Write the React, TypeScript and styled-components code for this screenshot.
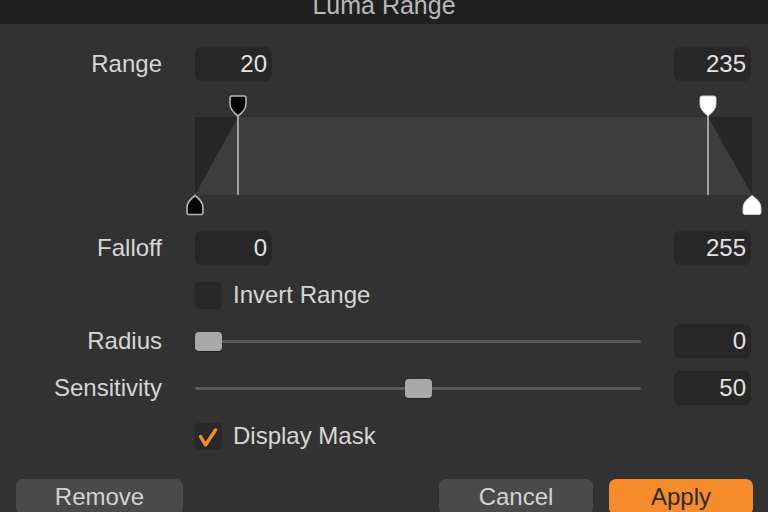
import React from "react";
import styled, { createGlobalStyle } from "styled-components";

const Global = createGlobalStyle`
  html, body { margin: 0; padding: 0; background: #323232; }
  body { width: 768px; height: 512px; overflow: hidden; font-family: "Liberation Sans", Arial, sans-serif; }
`;

const Dialog = styled.div`
  width: 768px;
  height: 512px;
  background: #323232;
  display: flex;
  flex-direction: column;
  overflow: hidden;
  color: #d8d8d8;
  font-size: 24px;
`;

const TitleBar = styled.div`
  height: 24px;
  flex: none;
  background: #1f1f1f;
  display: flex;
  justify-content: center;
  overflow: hidden;
`;

const Title = styled.div`
  line-height: 24px;
  margin-top: -7px;
  font-size: 25px;
  color: #b8b8b8;
`;

const Row = styled.div<{ $top: number; $h: number }>`
  display: grid;
  grid-template-columns: 162px 446px 77px;
  column-gap: 33px;
  align-items: center;
  margin-top: ${(p) => p.$top}px;
  height: ${(p) => p.$h}px;
  flex: none;
`;

const Label = styled.div`
  text-align: right;
  color: #d6d6d6;
  white-space: nowrap;
`;

const NumBox = styled.div`
  width: 77px;
  height: 34px;
  box-sizing: border-box;
  background: #272727;
  border-radius: 6px;
  display: flex;
  align-items: center;
  justify-content: flex-end;
  padding-right: 5px;
  color: #e2e2e2;
`;

const GraphCell = styled.div`
  grid-column: 2 / 4;
  height: 121px;
`;

const CheckCell = styled.div`
  grid-column: 2 / 4;
  display: flex;
  align-items: center;
  gap: 11px;
`;

const Box = styled.div`
  width: 27px;
  height: 27px;
  border-radius: 4px;
  background: #282828;
  display: flex;
  align-items: center;
  justify-content: center;
`;

const CheckText = styled.span`
  color: #d6d6d6;
`;

const Track = styled.div`
  position: relative;
  height: 19px;
  display: flex;
  align-items: center;
`;

const TrackLine = styled.div`
  height: 3px;
  width: 100%;
  background: #595959;
  border-radius: 2px;
`;

const Thumb = styled.div`
  position: absolute;
  top: 0;
  width: 27px;
  height: 19px;
  border-radius: 4px;
  background: #a9a9a9;
  box-shadow: 0 1px 1px rgba(0, 0, 0, 0.35);
`;

const ButtonBar = styled.div`
  display: flex;
  align-items: flex-start;
  margin-top: 30px;
  padding: 0 15px 0 16px;
  gap: 16px;
  flex: none;
`;

const Spacer = styled.div`
  flex: 1;
`;

const Button = styled.div<{ $w: number; $primary?: boolean }>`
  width: ${(p) => p.$w}px;
  height: 36px;
  border-radius: 7px;
  background: ${(p) => (p.$primary ? "#f68b2c" : "#4a4a4a")};
  color: ${(p) => (p.$primary ? "#2b2b2b" : "#d2d2d2")};
  display: flex;
  justify-content: center;
  padding-top: 4px;
  box-sizing: border-box;
  font-size: 24px;
  line-height: 28px;
`;

const Slider = ({ value }: { value: number }) => {
  const left = (446 - 27) * (value / 100);
  return (
    <Track>
      <TrackLine />
      <Thumb style={{ left }} />
    </Track>
  );
};

const topHandle = (cx: number) =>
  `M ${cx - 6} 1 h 12 q 2 0 2 2 v 6 q 0 6 -8 12 q -8 -6 -8 -12 v -6 q 0 -2 2 -2 z`;
const bottomHandle = (cx: number, w: number) =>
  `M ${cx} 100.5 q ${w} 6 ${w} 12 v 5 q 0 2 -2 2 h ${-(w * 2 - 4)} q -2 0 -2 -2 v -5 q 0 -6 ${w} -12 z`;

const Graph = () => (
  <svg width="556" height="121" viewBox="0 0 556 121" style={{ overflow: "visible", display: "block" }}>
    <rect x="0" y="22" width="557" height="78" fill="#262626" />
    <polygon points="43,22 513,22 557,100 0,100" fill="#3d3d3d" />
    <line x1="43" y1="18" x2="43" y2="100" stroke="#a0a0a0" strokeWidth="2" />
    <line x1="513" y1="18" x2="513" y2="100" stroke="#a0a0a0" strokeWidth="2" />
    <path d={topHandle(43)} fill="#050505" stroke="#b4b4b4" strokeWidth="1.6" />
    <path d={topHandle(513)} fill="#ffffff" stroke="#cfcfcf" strokeWidth="1" />
    <path d={bottomHandle(0, 8)} fill="#050505" stroke="#b4b4b4" strokeWidth="1.6" />
    <path d={bottomHandle(557, 9)} fill="#ffffff" stroke="#cfcfcf" strokeWidth="1" />
  </svg>
);

const Check = () => (
  <svg width="27" height="27" viewBox="0 0 27 27">
    <path d="M5.5 13.5 L10.5 22 L20.5 7" fill="none" stroke="#f68b2c" strokeWidth="3.4" strokeLinecap="round" strokeLinejoin="round" />
  </svg>
);

export default function App() {
  return (
    <Dialog>
      <Global />
      <TitleBar>
        <Title>Luma Range</Title>
      </TitleBar>

      <Row $top={22} $h={35}>
        <Label>Range</Label>
        <NumBox>20</NumBox>
        <NumBox>235</NumBox>
      </Row>

      <Row $top={14} $h={121}>
        <div />
        <GraphCell>
          <Graph />
        </GraphCell>
      </Row>

      <Row $top={15} $h={34}>
        <Label>Falloff</Label>
        <NumBox>0</NumBox>
        <NumBox>255</NumBox>
      </Row>

      <Row $top={16} $h={27}>
        <div />
        <CheckCell>
          <Box />
          <CheckText>Invert Range</CheckText>
        </CheckCell>
      </Row>

      <Row $top={16} $h={34}>
        <Label>Radius</Label>
        <Slider value={0} />
        <NumBox>0</NumBox>
      </Row>

      <Row $top={13} $h={34}>
        <Label>Sensitivity</Label>
        <Slider value={50} />
        <NumBox>50</NumBox>
      </Row>

      <Row $top={17} $h={27}>
        <div />
        <CheckCell>
          <Box>
            <Check />
          </Box>
          <CheckText>Display Mask</CheckText>
        </CheckCell>
      </Row>

      <ButtonBar>
        <Button $w={167}>Remove</Button>
        <Spacer />
        <Button $w={154}>Cancel</Button>
        <Button $w={144} $primary>
          Apply
        </Button>
      </ButtonBar>
    </Dialog>
  );
}
